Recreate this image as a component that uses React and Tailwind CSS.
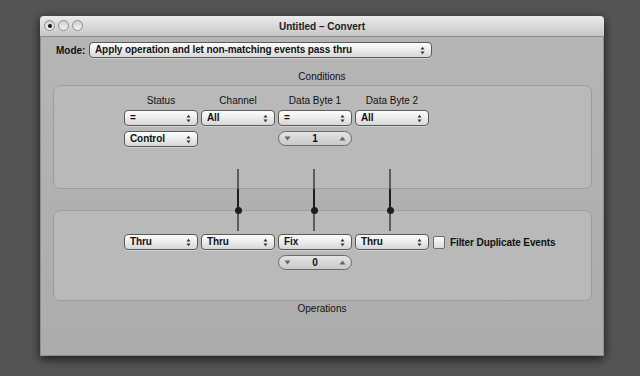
import React from 'react';

const FONT = { fontFamily: '"Liberation Sans", Arial, sans-serif' };

const Arrows = () => (
  <svg width="5" height="9" viewBox="0 0 5 9" className="shrink-0">
    <path d="M0.5 3.5 L2.5 0.8 L4.5 3.5 Z" fill="#333" />
    <path d="M0.5 5.5 L2.5 8.2 L4.5 5.5 Z" fill="#333" />
  </svg>
);

const Popup = ({ label, className = 'w-[74px]' }) => (
  <div
    className={`${className} h-[16px] flex items-center justify-between pl-[5px] pr-[6px] rounded-[4px] border border-[#5a5a5a] bg-gradient-to-b from-[#fdfdfd] via-[#ececec] to-[#d6d6d6] shadow-[0_1px_0_rgba(255,255,255,0.35)]`}
  >
    <span className="text-[10px] font-bold text-[#111] leading-none tracking-[-0.1px]">{label}</span>
    <Arrows />
  </div>
);

const Stepper = ({ value }) => (
  <div className="w-[74px] h-[15px] flex items-center justify-between px-[5px] rounded-full border border-[#6a6a6a] bg-gradient-to-b from-[#e4e4e4] to-[#c9c9c9]">
    <svg width="7" height="5" viewBox="0 0 7 5"><path d="M0.5 0.5 L6.5 0.5 L3.5 4.5 Z" fill="#666" /></svg>
    <span className="text-[10px] font-bold text-[#111] leading-none">{value}</span>
    <svg width="7" height="5" viewBox="0 0 7 5"><path d="M0.5 4.5 L6.5 4.5 L3.5 0.5 Z" fill="#666" /></svg>
  </div>
);

const Light = ({ dot }) => (
  <div className="w-[11px] h-[11px] rounded-full border border-[#8d8d8d] bg-gradient-to-b from-[#cfcfcf] to-[#f4f4f4] flex items-center justify-center">
    {dot && <div className="w-[4px] h-[4px] rounded-full bg-[#111]" />}
  </div>
);

const Connector = ({ left }) => (
  <div className="absolute top-[132px] w-[2px] h-[62px] flex flex-col items-center" style={{ left }}>
    <div className="w-[2px] h-[20px] bg-[#5c5c5c]" />
    <div className="w-[2px] h-[21px] bg-[#1e1e1e]" />
    <div className="w-[7px] h-[7px] -my-[3px] rounded-full bg-[#1e1e1e] relative" />
    <div className="w-[2px] h-[20px] bg-[#5c5c5c]" />
  </div>
);

export default function App() {
  return (
    <div className="w-[640px] h-[376px] bg-[#555555] pl-[40px] pt-[16px] overflow-hidden" style={FONT}>
      <div className="w-[564px] h-[340px] flex flex-col shadow-[0_3px_10px_rgba(0,0,0,0.7)]">
        {/* title bar */}
        <div className="h-[21px] shrink-0 relative flex items-center justify-center rounded-t-[4px] bg-gradient-to-b from-[#ececec] to-[#c6c6c6] border-b border-[#8c8c8c]">
          <div className="absolute left-[4px] top-[4px] flex gap-[3px]">
            <Light dot />
            <Light />
            <Light />
          </div>
          <span className="text-[10px] font-bold text-[#222]">Untitled – Convert</span>
        </div>

        {/* body */}
        <div className="flex-1 relative bg-gradient-to-b from-[#b5b5b5] to-[#acacac] border-x border-b border-[#8e8e8e] px-[12px]">
          <div className="flex items-center mt-[5px] pl-[3px]">
            <span className="w-[33px] text-[10px] font-bold text-[#111]">Mode:</span>
            <Popup label="Apply operation and let non-matching events pass thru" className="w-[343px]" />
          </div>

          <div className="text-center text-[10px] text-[#111] leading-[12px] mt-[13px]">Conditions</div>

          <div className="mt-[2px] w-[539px] h-[104px] rounded-[7px] border border-[#9c9c9c] bg-[#b9b9b9] pl-[70px]">
            <div className="grid grid-cols-[74px_74px_74px_74px] gap-x-[3px] mt-[9px]">
              {['Status', 'Channel', 'Data Byte 1', 'Data Byte 2'].map((h) => (
                <div key={h} className="text-center text-[10px] text-[#111] leading-[12px]">{h}</div>
              ))}
            </div>
            <div className="grid grid-cols-[74px_74px_74px_74px] gap-x-[3px] gap-y-[5px] mt-[3px]">
              <Popup label="=" />
              <Popup label="All" />
              <Popup label="=" />
              <Popup label="All" />
              <Popup label="Control" />
              <div />
              <Stepper value="1" />
              <div />
            </div>
          </div>

          <div className="mt-[21px] w-[539px] h-[91px] rounded-[7px] border border-[#9c9c9c] bg-[#b9b9b9] pl-[70px]">
            <div className="flex items-center gap-x-[3px] mt-[23px]">
              <Popup label="Thru" />
              <Popup label="Thru" />
              <Popup label="Fix" />
              <Popup label="Thru" />
              <div className="ml-[1px] w-[12px] h-[13px] rounded-[2px] border border-[#6e6e6e] bg-gradient-to-b from-[#fafafa] to-[#dedede]" />
              <span className="ml-[2px] text-[10px] font-bold text-[#111] tracking-[-0.1px]">Filter Duplicate Events</span>
            </div>
            <div className="mt-[5px] pl-[154px]">
              <Stepper value="0" />
            </div>
          </div>

          <div className="text-center text-[10px] text-[#111] leading-[12px] mt-[2px]">Operations</div>

          <Connector left="196px" />
          <Connector left="272px" />
          <Connector left="348px" />
        </div>
      </div>
    </div>
  );
}
